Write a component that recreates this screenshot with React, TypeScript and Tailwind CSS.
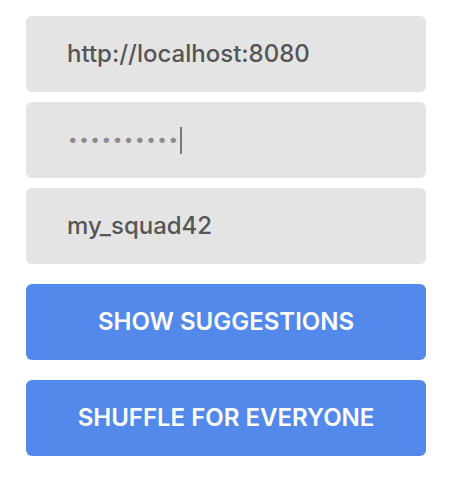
import React from "react";

const font = { fontFamily: "Inter, 'Noto Sans', sans-serif" };

export default function App() {
  return (
    <div className="w-[450px] h-[482px] bg-white pl-[26px] pt-4" style={font}>
      <div className="w-[400px] flex flex-col">
        <div className="h-[76px] rounded-[6px] bg-[#e4e4e4] flex items-center pl-[41px] text-[24px] font-medium text-[#555555]">
          http://localhost:8080
        </div>
        <div className="mt-[10px] h-[76px] rounded-[6px] bg-[#e4e4e4] flex items-center pl-[42px]">
          <span className="text-[17px] tracking-[1.6px] text-[#8a8a8a]">••••••••••</span>
          <span className="ml-[0px] w-[2px] h-[27px] bg-[#7a7a7a]" />
        </div>
        <div className="mt-[10px] h-[76px] rounded-[6px] bg-[#e4e4e4] flex items-center pl-[41px] text-[24px] font-medium text-[#555555]">
          my_squad42
        </div>
        <button className="mt-5 h-[76px] rounded-[6px] bg-[#5289eb] text-white text-[24px] font-semibold uppercase">
          Show Suggestions
        </button>
        <button className="mt-5 h-[76px] rounded-[6px] bg-[#5289eb] text-white text-[24px] font-semibold uppercase">
          Shuffle for Everyone
        </button>
      </div>
    </div>
  );
}
